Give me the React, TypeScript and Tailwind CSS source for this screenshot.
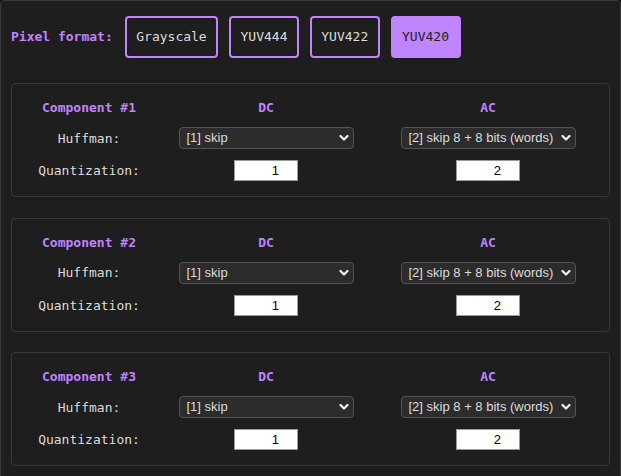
import React from "react";

const mono = "font-['DejaVu_Sans_Mono',monospace]";
const sans = "font-['Liberation_Sans',Arial,sans-serif]";

function Chevron() {
  return (
    <svg width="10" height="7" viewBox="0 0 10 7" className="pointer-events-none absolute right-[5px] top-1/2 -translate-y-1/2">
      <path d="M1.5 1.5 L5 5 L8.5 1.5" fill="none" stroke="#f0f0f0" strokeWidth="2.2" strokeLinecap="round" strokeLinejoin="round" />
    </svg>
  );
}

function Select({ value }: { value: string }) {
  return (
    <div className="relative w-[175px] h-[22px]">
      <select
        defaultValue={value}
        className={`${sans} block appearance-none w-full h-full rounded-[4px] border border-[#535353] bg-[#2c2c2c] pl-[7px] pr-[18px] text-[13px] leading-[20px] text-[#dcdcdc] outline-none`}
      >
        <option>[0] none</option>
        <option>[1] skip</option>
        <option>[2] skip 8 + 8 bits (words)</option>
      </select>
      <Chevron />
    </div>
  );
}

function NumInput({ value }: { value: string }) {
  return (
    <input
      type="text"
      defaultValue={value}
      className={`${sans} block w-[64px] h-[21px] border border-[#9a9a9a] bg-white text-right pr-[18px] text-[13px] text-black outline-none`}
    />
  );
}

const rowGrid = "grid grid-cols-[122px_232px_212px]";
const cell = "flex items-center justify-center";

function Card({ n }: { n: number }) {
  return (
    <div className="rounded-[4px] border border-[#383838] pt-[12px] pb-[13px] pl-[16px]">
      <div className={`${rowGrid} h-[24px]`}>
        <div className={`${mono} ${cell} text-[13px] font-bold text-[#c084fc]`}>Component #{n}</div>
        <div className={`${mono} ${cell} text-[13px] font-bold text-[#c084fc]`}>DC</div>
        <div className={`${mono} ${cell} text-[13px] font-bold text-[#c084fc]`}>AC</div>
      </div>
      <div className={`${rowGrid} mt-[6px] h-[24px]`}>
        <div className={`${mono} ${cell} pt-[1px] text-[13px] text-[#dcdcdc]`}>Huffman:</div>
        <div className={cell}><Select value="[1] skip" /></div>
        <div className={cell}><Select value="[2] skip 8 + 8 bits (words)" /></div>
      </div>
      <div className={`${rowGrid} mt-[8px] h-[25px]`}>
        <div className={`${mono} ${cell} pt-[1px] text-[13px] text-[#dcdcdc]`}>Quantization:</div>
        <div className={cell}><NumInput value="1" /></div>
        <div className={cell}><NumInput value="2" /></div>
      </div>
    </div>
  );
}

export default function App() {
  const formats = ["Grayscale", "YUV444", "YUV422", "YUV420"];
  return (
    <div className="min-h-screen w-[621px] bg-[#161616]">
      <div className="rounded-[5px] border border-[#3a3a3a] bg-[#1e1e1e] px-[10px] pt-[15px] pb-[20px]">
        <div className="flex items-center">
          <span className={`${mono} text-[13px] font-bold text-[#c084fc]`}>Pixel format:</span>
          <div className="ml-[12px] flex gap-[10.8px]">
            {formats.map((f) => {
              const active = f === "YUV420";
              return (
                <button
                  key={f}
                  className={`${mono} h-[42px] rounded-[4px] border-2 border-[#c084fc] px-[9.5px] text-[13px] ${
                    active ? "bg-[#c084fc] text-[#1e1e1e]" : "bg-transparent text-[#dcdcdc]"
                  }`}
                >
                  {f}
                </button>
              );
            })}
          </div>
        </div>
        <div className="mt-[25px] flex flex-col gap-[20.5px]">
          <Card n={1} />
          <Card n={2} />
          <Card n={3} />
        </div>
      </div>
    </div>
  );
}
